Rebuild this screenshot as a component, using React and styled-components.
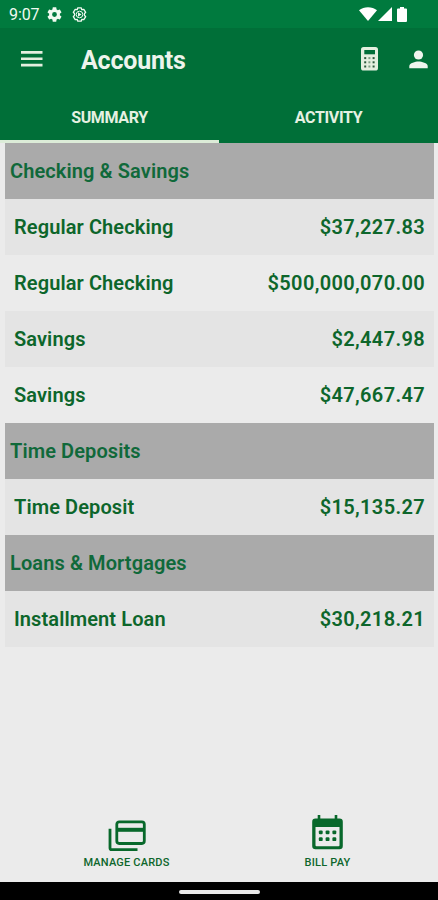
import React from "react";
import styled, { createGlobalStyle } from "styled-components";

const Global = createGlobalStyle`
  * { box-sizing: border-box; }
  body { margin: 0; background: #ebebeb; }
`;

const Screen = styled.div`
  width: 438px;
  height: 900px;
  display: flex;
  flex-direction: column;
  overflow: hidden;
  background: #ebebeb;
  color: #0d662b;
  font-family: Roboto, "Liberation Sans", sans-serif;
  font-weight: 500;
`;

const StatusBar = styled.div`
  height: 28px;
  flex: none;
  display: flex;
  align-items: center;
  padding: 0 30px 0 9px;
  background: #007a3e;
  color: #f1faf1;
`;

const Clock = styled.span`
  width: 38px;
  font-size: 16px;
  font-weight: 400;
  line-height: 28px;
  padding-top: 1px;
  letter-spacing: -0.1px;
`;

const StatusIcons = styled.div`
  display: flex;
  align-items: center;
  gap: ${(p) => p.$gap}px;
  margin-left: ${(p) => (p.$end ? "auto" : "0")};
`;

const Toolbar = styled.header`
  height: 64px;
  flex: none;
  display: flex;
  align-items: center;
  padding: 0 10px 2px 21px;
  background: #006f38;
  color: #e4efdf;
`;

const Title = styled.h1`
  margin: 3px auto 0 38px;
  font-size: 25px;
  line-height: 30px;
  font-weight: 700;
  letter-spacing: -0.2px;
  color: #edf4ec;
`;

const ToolbarActions = styled.div`
  display: flex;
  align-items: center;
  gap: 31px;
`;

const Tabs = styled.nav`
  height: 51px;
  flex: none;
  display: grid;
  grid-template-columns: 1fr 1fr;
  background: #006f38;
`;

const Tab = styled.div`
  display: flex;
  justify-content: center;
  padding-top: 15px;
  font-size: 16px;
  line-height: 21px;
  font-weight: 700;
  letter-spacing: -0.35px;
  color: #e6f1e2;
  border-bottom: 3px solid ${(p) => (p.$active ? "#dcecd8" : "transparent")};
`;

const List = styled.main`
  flex: 1;
  padding: 0 4px 0 5px;
`;

const SectionTitle = styled.h2`
  height: 56px;
  margin: 0;
  padding-left: 5px;
  font-size: 20px;
  font-weight: 600;
  line-height: 56px;
  letter-spacing: 0.1px;
  color: #10693a;
  background: #aaaaaa;
`;

const Row = styled.div`
  height: 56px;
  display: flex;
  justify-content: space-between;
  padding: 0 9px;
  font-size: 20px;
  font-weight: 600;
  line-height: 56px;
  letter-spacing: 0.1px;
  background: ${(p) => (p.$shaded ? "#e4e4e4" : "transparent")};
`;

const Amount = styled.span`
  letter-spacing: 0.35px;
`;

const Footer = styled.footer`
  height: 70px;
  flex: none;
  display: flex;
  padding: 0 10px 0 26px;
`;

const FooterItem = styled.div`
  flex: 1;
  display: flex;
  flex-direction: column;
  align-items: center;
  justify-content: flex-end;
  gap: ${(p) => p.$gap}px;
  padding-bottom: 12px;
  font-size: 11px;
  line-height: 14px;
  letter-spacing: 0.2px;
`;

const SystemNav = styled.div`
  height: 18px;
  flex: none;
  display: flex;
  justify-content: center;
  padding-top: 8px;
  background: #000;
`;

const HomePill = styled.div`
  width: 81px;
  height: 4px;
  border-radius: 2px;
  background: #e9e9e9;
`;

const GearIcon = () => (
  <svg width="15" height="15" viewBox="2 2 20 20" fill="currentColor">
    <path d="M19.14 12.94c.04-.3.06-.61.06-.94s-.02-.64-.07-.94l2.03-1.58a.49.49 0 0 0 .12-.61l-1.92-3.32a.49.49 0 0 0-.59-.22l-2.39.96a7 7 0 0 0-1.62-.94l-.36-2.54A.48.48 0 0 0 13.92 2.4h-3.84a.48.48 0 0 0-.48.41l-.36 2.54c-.59.24-1.13.57-1.62.94l-2.39-.96a.48.48 0 0 0-.59.22L2.72 8.87a.48.48 0 0 0 .12.61l2.03 1.58a6 6 0 0 0 0 1.88l-2.03 1.58a.49.49 0 0 0-.12.61l1.92 3.32c.12.22.37.29.59.22l2.39-.96c.5.38 1.03.7 1.62.94l.36 2.54c.05.24.24.41.48.41h3.84c.24 0 .44-.17.47-.41l.36-2.54a7 7 0 0 0 1.62-.94l2.39.96c.22.08.47 0 .59-.22l1.92-3.32a.48.48 0 0 0-.12-.61zM12 15.2a3.2 3.2 0 1 1 0-6.4 3.2 3.2 0 0 1 0 6.4z" />
  </svg>
);

const GearOutlineIcon = () => (
  <svg width="15" height="15" viewBox="0 0 15 15" fill="none" stroke="currentColor">
    <path
      strokeWidth="1.3"
      strokeLinejoin="round"
      d="M5.800 .8h3.400l.6 1.900 2-.4 1.900 3-1.300 1.400v1.600l1.300 1.400-1.900 3-2-.4-.6 1.900H5.800l-.6-1.900-2 .4-1.900-3 1.300-1.400V6.700L1.300 5.300l1.900-3 2 .4z"
    />
    <circle cx="7.500" cy="7.500" r="3.300" strokeWidth="1" />
    <path d="M6 5.300L9.500 7.500 6 9.700z" fill="currentColor" stroke="none" />
  </svg>
);

const WifiIcon = () => (
  <svg width="18" height="14" viewBox="0 0 18 14" fill="#fff">
    <path d="M0 3.200C5 -.9 13 -.9 18 3.200L9 14z" />
  </svg>
);

const SignalIcon = () => (
  <svg width="14" height="14" viewBox="0 0 14 14" fill="#fff">
    <path d="M14 0v14H0z" />
  </svg>
);

const BatteryIcon = () => (
  <svg width="11" height="15" viewBox="0 0 11 15" fill="#fff">
    <path d="M3 0h4v1.500h2a1 1 0 0 1 1 1V14a1 1 0 0 1-1 1H1a1 1 0 0 1-1-1V2.500a1 1 0 0 1 1-1h2z" />
  </svg>
);

const MenuIcon = () => (
  <svg width="22" height="16" viewBox="0 0 22 16" fill="currentColor">
    <path d="M0 0h21.500v2.700H0zM0 6.400h21.500v2.700H0zM0 12.800h21.500v2.700H0z" />
  </svg>
);

const KEYS = [10.500, 14.700, 18.900].flatMap((y) => [3.500, 7.700, 11.900].map((x) => [x, y]));

const CalculatorIcon = () => (
  <svg width="17" height="24" viewBox="0 0 17 24">
    <rect width="17" height="23.500" rx="2.600" fill="currentColor" />
    <rect x="3.300" y="3" width="10.700" height="4.300" fill="#006f38" />
    {KEYS.map(([x, y]) => (
      <rect
        key={`${x}-${y}`}
        x={x - 0.300}
        y={y - 0.400}
        width="2"
        height="2"
        fill={x === 7.700 ? "#7d9f84" : "#2b5a3c"}
      />
    ))}
  </svg>
);

const PersonIcon = () => (
  <svg width="19" height="19" viewBox="0 0 19 19" fill="#eff5ee">
    <circle cx="9.500" cy="5" r="4.600" />
    <path d="M.3 18.200v-2.200c0-3.100 6.100-4.600 9.200-4.600s9.200 1.500 9.200 4.600v2.200z" />
  </svg>
);

const CardsIcon = () => (
  <svg width="38" height="32" viewBox="0 0 38 32" fill="none" stroke="#08682b" strokeWidth="2.800">
    <rect x="8.800" y="1.900" width="27.500" height="21.600" rx="2.400" />
    <path d="M9 9.800h27.500" strokeWidth="4" />
    <path d="M2 8.800v19.200a1.700 1.700 0 0 0 1.700 1.700H29.500" />
  </svg>
);

const CalendarIcon = () => (
  <svg width="31" height="35" viewBox="0 0 31 35" fill="#08682b">
    <path
      fillRule="evenodd"
      d="M5.700 0h2.600v3.500h14.400V0h2.600v3.500H27.500a3.300 3.300 0 0 1 3.300 3.300V31a3.300 3.300 0 0 1-3.300 3.300h-24A3.300 3.300 0 0 1 .2 31V6.800a3.300 3.300 0 0 1 3.300-3.300h2.200zM3.500 12v18.200a1 1 0 0 0 1 1h22a1 1 0 0 0 1-1V12z"
    />
    {[15.400, 22.200].flatMap((y) =>
      [6.800, 13.600, 20.400].map((x) => (
        <rect key={`${x}-${y}`} x={x} y={y} width="3.900" height="3.900" rx="1.200" />
      ))
    )}
  </svg>
);

const SECTIONS = [
  {
    title: "Checking & Savings",
    accounts: [
      ["Regular Checking", "$37,227.83"],
      ["Regular Checking", "$500,000,070.00"],
      ["Savings", "$2,447.98"],
      ["Savings", "$47,667.47"],
    ],
  },
  { title: "Time Deposits", accounts: [["Time Deposit", "$15,135.27"]] },
  { title: "Loans & Mortgages", accounts: [["Installment Loan", "$30,218.21"]] },
];

export default function App() {
  return (
    <>
      <Global />
      <Screen>
        <StatusBar>
          <Clock>9:07</Clock>
          <StatusIcons $gap={10}>
            <GearIcon />
            <GearOutlineIcon />
          </StatusIcons>
          <StatusIcons $end $gap={1}>
            <WifiIcon />
            <SignalIcon />
            <span />
            <span />
            <span />
            <span />
            <BatteryIcon />
          </StatusIcons>
        </StatusBar>
        <Toolbar>
          <MenuIcon />
          <Title>Accounts</Title>
          <ToolbarActions>
            <CalculatorIcon />
            <PersonIcon />
          </ToolbarActions>
        </Toolbar>
        <Tabs>
          <Tab $active>SUMMARY</Tab>
          <Tab>ACTIVITY</Tab>
        </Tabs>
        <List>
          {SECTIONS.map((section) => (
            <section key={section.title}>
              <SectionTitle>{section.title}</SectionTitle>
              {section.accounts.map(([name, amount], i) => (
                <Row key={amount} $shaded={i % 2 === 0}>
                  <span>{name}</span>
                  <Amount>{amount}</Amount>
                </Row>
              ))}
            </section>
          ))}
        </List>
        <Footer>
          <FooterItem $gap={4}>
            <CardsIcon />
            <span>MANAGE CARDS</span>
          </FooterItem>
          <FooterItem $gap={6}>
            <CalendarIcon />
            <span>BILL PAY</span>
          </FooterItem>
        </Footer>
        <SystemNav>
          <HomePill />
        </SystemNav>
      </Screen>
    </>
  );
}
